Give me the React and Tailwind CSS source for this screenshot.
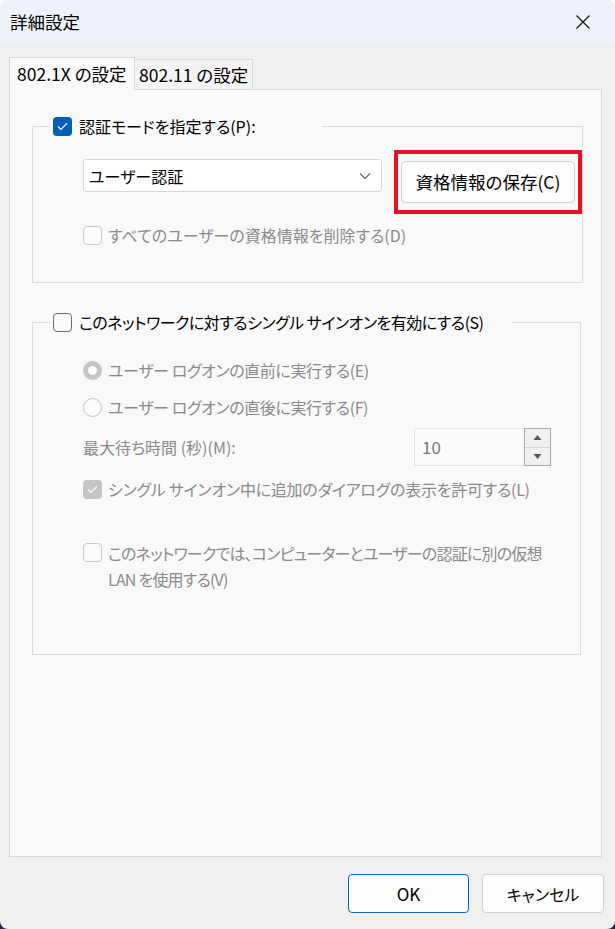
import React from 'react';

const Check = ({ color = 'white' }) => (
  <svg viewBox="0 0 20 20" className="w-[19px] h-[19px]" fill="none" stroke={color} strokeWidth="1.3" strokeLinecap="round" strokeLinejoin="round">
    <path d="M5.5 10.2l2.9 2.9 6-6.2" />
  </svg>
);

const CheckBox = ({ checked, disabled }) => {
  if (checked && !disabled)
    return (
      <span className="flex w-[19px] h-[19px] shrink-0 items-center justify-center rounded-[4px] bg-[#005fb8]">
        <Check />
      </span>
    );
  if (checked && disabled)
    return (
      <span className="flex w-[19px] h-[19px] shrink-0 items-center justify-center rounded-[4px] bg-[#c5c5c5]">
        <Check />
      </span>
    );
  return (
    <span
      className={
        disabled
          ? 'block w-[19px] h-[19px] shrink-0 rounded-[4px] border border-[#c9c9c9] bg-[#fbfbfb]'
          : 'block w-[19px] h-[19px] shrink-0 rounded-[4px] border border-[#6b6b6b] bg-[#fafafa]'
      }
    />
  );
};

const Radio = ({ selected }) =>
  selected ? (
    <span className="block w-[19px] h-[19px] shrink-0 rounded-full border-[5px] border-[#c5c5c5] bg-white" />
  ) : (
    <span className="block w-[19px] h-[19px] shrink-0 rounded-full border border-[#c6c6c6] bg-[#fbfbfb]" />
  );

const Option = ({ control, children, className = '', textClass = '' }) => (
  <div className={`flex items-center gap-[6px] h-[20px] text-[#8a8a8a] ${className}`}>
    {control}
    <span className={`whitespace-nowrap ${textClass}`}>{children}</span>
  </div>
);

export default function App() {
  return (
    <div className="w-[615px] h-[929px] bg-[linear-gradient(to_bottom,#ffffff_50%,#1d2b50_50%)] font-['Noto_Sans_CJK_JP',sans-serif] [font-feature-settings:'palt'] text-[16px] leading-[20px] text-[#1a1a1a]">
      <div className="flex flex-col w-full h-full rounded-[8px] overflow-hidden bg-[#f0f0f0]">
        {/* title bar */}
        <div className="flex items-center justify-between h-[43px] shrink-0 bg-[#eef2f9] pl-[10px] pr-[24px]">
          <span className="text-[17.5px] text-black">詳細設定</span>
          <svg viewBox="0 0 16 16" className="w-[16px] h-[16px]" fill="none" stroke="#111" strokeWidth="1.2">
            <path d="M1.5 1.5l13 13M14.5 1.5l-13 13" />
          </svg>
        </div>

        <div className="flex flex-col flex-1 pt-[14px] pl-[9px] pr-[13px]">
          {/* tabs */}
          <div className="flex items-end h-[32px] shrink-0 text-[17.5px]">
            <div className="relative z-10 -mb-px flex items-center h-[33px] w-[126px] pl-[7px] border border-b-0 border-[#dadada] bg-[#f9f9f9] text-black">
              802.1X の設定
            </div>
            <div className="flex items-center h-[30px] w-[118px] pl-[4px] border border-l-0 border-b-0 border-[#dadada] bg-[#f4f4f4] text-black">
              802.11 の設定
            </div>
          </div>

          {/* panel */}
          <div className="flex-1 border border-[#dadada] bg-[#f9f9f9]">
            <fieldset className="ml-[22px] mr-[20px] mt-[26px] border border-[#dcdcdc] pb-[37px]">
              <legend className="ml-[17px] w-[272px] pl-[3px]">
                <div className="flex items-center gap-[7px] h-[20px] text-black">
                  <CheckBox checked />
                  <span>認証モードを指定する(P):</span>
                </div>
              </legend>

              <div className="flex items-start gap-[12px] mt-[14px] pl-[50px]">
                <div className="flex items-center justify-between mt-[9px] w-[299px] h-[33px] pl-[5px] pr-[10px] rounded-[3px] border border-[#d6d6d6] bg-white text-black">
                  <span>ユーザー認証</span>
                  <svg viewBox="0 0 12 8" className="w-[12px] h-[8px]" fill="none" stroke="#606060" strokeWidth="1.1">
                    <path d="M1 1.5l5 5 5-5" />
                  </svg>
                </div>
                <div className="flex items-center justify-center w-[188px] h-[64px] border-[4px] border-[#e81123]">
                  <button className="w-[174px] h-[42px] rounded-[4px] border border-[#d0d0d0] bg-[#fdfdfd] text-[17.5px] text-black">
                    資格情報の保存(C)
                  </button>
                </div>
              </div>

              <Option control={<CheckBox disabled />} className="mt-[11px] ml-[50px]">
                すべてのユーザーの資格情報を削除する(D)
              </Option>
            </fieldset>

            <fieldset className="ml-[22px] mr-[20px] mt-[29px] h-[343px] border border-[#dcdcdc]">
              <legend className="ml-[17px] w-[462px] pl-[3px]">
                <div className="flex items-center gap-[7px] h-[20px] text-black">
                  <CheckBox />
                  <span className="whitespace-nowrap tracking-[-0.5px]">このネットワークに対するシングル サインオンを有効にする(S)</span>
                </div>
              </legend>

              <div className="pl-[50px]">
                <Option control={<Radio selected />} className="mt-[28px]" textClass="tracking-[-0.4px]">
                  ユーザー ログオンの直前に実行する(E)
                </Option>
                <Option control={<Radio />} className="mt-[17px]" textClass="tracking-[-0.4px]">
                  ユーザー ログオンの直後に実行する(F)
                </Option>

                <div className="flex items-center justify-between w-[468px] mt-[11px] text-[#8a8a8a]">
                  <span>最大待ち時間 (秒)(M):</span>
                  <div className="flex h-[38px]">
                    <div className="flex items-center w-[110px] pl-[7px] border border-r-0 border-[#e3e3e3] bg-[#fafafa] text-[17px] text-[#7a7a7a]">
                      10
                    </div>
                    <div className="flex flex-col w-[27px] border border-[#a8a8a8] bg-[#f0f0f0]">
                      <div className="flex flex-1 items-center justify-center border-b border-[#d4d4d4]">
                        <svg viewBox="0 0 8 5" className="w-[9px] h-[5px]"><path d="M0 5L4 0l4 5z" fill="#5a5a5a" /></svg>
                      </div>
                      <div className="flex flex-1 items-center justify-center">
                        <svg viewBox="0 0 8 5" className="w-[9px] h-[5px]"><path d="M0 0l4 5 4-5z" fill="#5a5a5a" /></svg>
                      </div>
                    </div>
                  </div>
                </div>

                <Option control={<CheckBox checked disabled />} className="mt-[13px]" textClass="tracking-[-0.25px]">
                  シングル サインオン中に追加のダイアログの表示を許可する(L)
                </Option>

                <div className="flex items-start gap-[6px] mt-[41px] text-[#8a8a8a] leading-[26px]">
                  <span className="mt-[3px]">
                    <CheckBox disabled />
                  </span>
                  <span className="tracking-[-0.8px]">
                    このネットワークでは、コンピューターとユーザーの認証に別の仮想
                    <br />
                    LAN を使用する(V)
                  </span>
                </div>
              </div>
            </fieldset>
          </div>

          {/* footer */}
          <div className="flex justify-end gap-[13px] h-[72px] shrink-0 pt-[17px] -mr-[2px]">
            <button className="w-[121px] h-[39px] rounded-[4px] border border-[#0067c0] bg-[#fdfdfd] text-[17px] text-black">OK</button>
            <button className="w-[122px] h-[39px] rounded-[4px] border border-[#d0d0d0] bg-[#fdfdfd] text-black">キャンセル</button>
          </div>
        </div>
      </div>
    </div>
  );
}
